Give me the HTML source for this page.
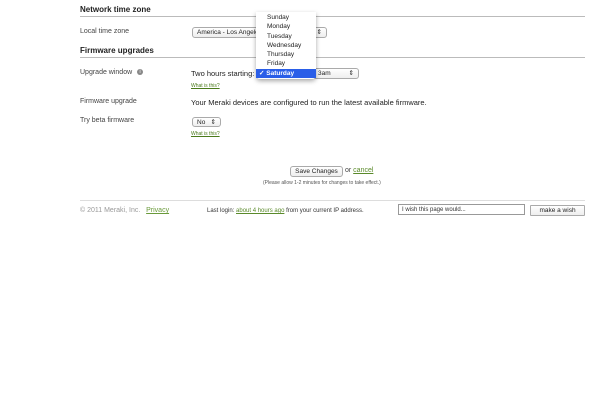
<!DOCTYPE html>
<html><head><style>
body{margin:0;width:600px;height:413px;background:#fff;font-family:"Liberation Sans",sans-serif;color:#333;position:relative;overflow:hidden}
.a{position:absolute;white-space:nowrap}
.h{font-weight:bold;font-size:8px;color:#222}
.l{font-size:7px;color:#444}
.line{position:absolute;left:80px;width:505px;height:1px;background:#bbb}
.sel{position:absolute;border:1px solid #aaa;border-radius:3px;background:linear-gradient(#fff,#eee);font-size:6.5px;color:#222;box-sizing:border-box;padding:1px 4px;line-height:8px}
.sm{font-size:5px;color:#4a7a1a;text-decoration:underline}
.g{color:#5a8a2a;text-decoration:underline}
</style></head><body>
<div class="a h" style="left:80px;top:5px">Network time zone</div>
<div class="line" style="top:16px"></div>
<div class="a l" style="left:80px;top:28px">Local time zone</div>
<div class="sel" style="left:192px;top:27px;width:135px;height:11px">America - Los Angeles<span style="position:absolute;right:4px">&#8661;</span></div>
<div class="a h" style="left:80px;top:46px">Firmware upgrades</div>
<div class="line" style="top:57px"></div>
<div class="a l" style="left:80px;top:69px">Upgrade window <span style="display:inline-block;width:6px;height:6px;border-radius:50%;background:#888;color:#fff;font-size:5px;text-align:center;line-height:6px;margin-left:3px;vertical-align:middle">i</span></div>
<div class="a l" style="left:191px;top:69px;font-size:7.5px;color:#222">Two hours starting:</div>
<div class="sel" style="left:313px;top:68px;width:46px;height:11px">3am<span style="position:absolute;right:4px">&#8661;</span></div>
<div class="a sm" style="left:191px;top:83px">What is this?</div>
<div class="a l" style="left:80px;top:98px">Firmware upgrade</div>
<div class="a l" style="left:191px;top:98px;font-size:7.5px;color:#222">Your Meraki devices are configured to run the latest available firmware.</div>
<div class="a l" style="left:80px;top:117px">Try beta firmware</div>
<div class="sel" style="left:192px;top:117px;width:29px;height:10px">No<span style="position:absolute;right:4px">&#8661;</span></div>
<div class="a sm" style="left:191px;top:131px">What is this?</div>
<div style="position:absolute;left:256px;top:12px;width:60px;height:67px;background:#fff;box-shadow:0 2px 5px rgba(0,0,0,.35);border-radius:0 0 4px 4px;font-size:6.5px;color:#222;line-height:9.3px;padding-top:1px;box-sizing:border-box">
<div style="padding-left:11px">Sunday</div><div style="padding-left:11px">Monday</div><div style="padding-left:11px">Tuesday</div><div style="padding-left:11px">Wednesday</div><div style="padding-left:11px">Thursday</div><div style="padding-left:11px">Friday</div>
<div style="padding-left:3px;background:#2a5ee8;color:#fff;font-weight:bold">&#10003; Saturday</div></div>
<div class="sel" style="left:290px;top:166px;width:53px;height:11px;font-size:6.5px;text-align:center;padding:1px 0">Save Changes</div>
<div class="a l" style="left:345px;top:167px">or <span class="g">cancel</span></div>
<div class="a" style="left:263px;top:180px;font-size:5px;color:#555">(Please allow 1-2 minutes for changes to take effect.)</div>
<div style="position:absolute;left:80px;top:200px;width:505px;height:1px;background:#ddd"></div>
<div class="a l" style="left:80px;top:207px;color:#999">© 2011 Meraki, Inc.&nbsp;&nbsp;&nbsp;<span class="g" style="color:#6a9a3a">Privacy</span></div>
<div class="a" style="left:207px;top:208px;font-size:6px;color:#333">Last login: <span class="g">about 4 hours ago</span> from your current IP address.</div>
<div style="position:absolute;left:398px;top:204px;width:127px;height:11px;border:1px solid #999;box-sizing:border-box;font-size:6px;padding:1.5px 3px;line-height:7px">I wish this page would...</div>
<div class="sel" style="left:530px;top:205px;width:55px;height:11px;text-align:center;font-size:6.5px;border-radius:1px">make a wish</div>
</body></html>
